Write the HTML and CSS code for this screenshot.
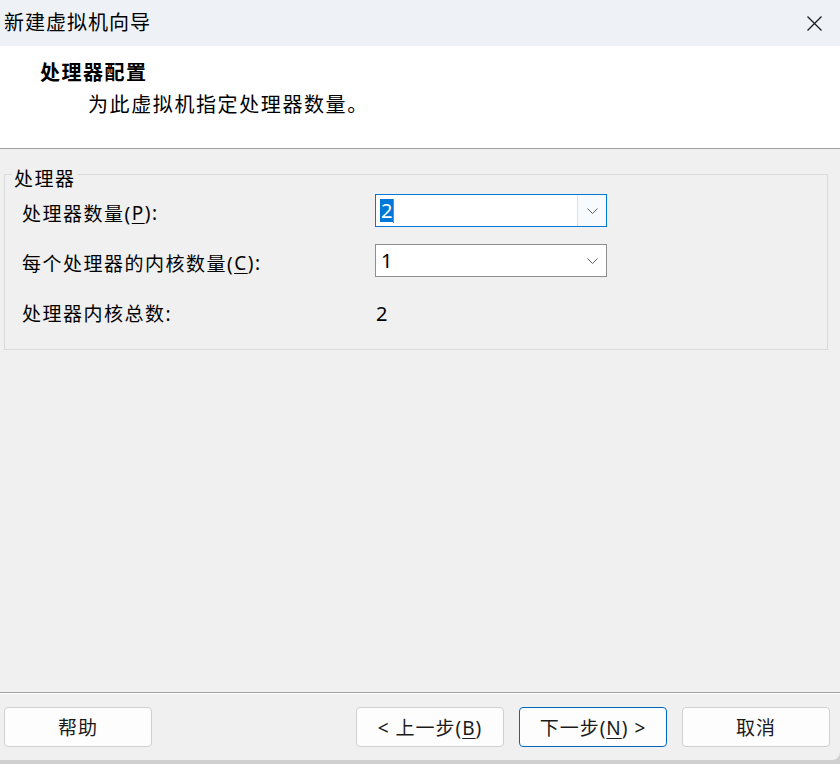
FILE: index.html
```html
<!DOCTYPE html>
<html lang="zh-CN">
<head>
<meta charset="utf-8">
<title>新建虚拟机向导</title>
<link rel="stylesheet" href="styles.css">
</head>
<body>
<div class="window">
  <div class="titlebar">
    <div class="title">新建虚拟机向导</div>
    <svg class="close" width="15" height="15" viewBox="0 0 15 15"><path d="M0.5 0.5 L14.5 14.5 M14.5 0.5 L0.5 14.5" stroke="#1a1a1a" stroke-width="1.3" fill="none"/></svg>
  </div>
  <div class="header">
    <div class="heading">处理器配置</div>
    <div class="subtitle">为此虚拟机指定处理器数量。</div>
  </div>
  <div class="content">
    <div class="group">
      <div class="legend">处理器</div>
      <div class="rows">
        <div class="label">处理器数量(<u>P</u>):</div>
        <div class="cell combo-cell">
          <div class="combo focused">
            <div class="combo-value"><span class="sel">2</span><span class="caret"></span></div>
            <div class="combo-btn"><svg width="11" height="6" viewBox="0 0 11 6"><polyline points="0.5,0.5 5.5,5.5 10.5,0.5" fill="none" stroke="#606060" stroke-width="1"/></svg></div>
          </div>
        </div>
        <div class="label">每个处理器的内核数量(<u>C</u>):</div>
        <div class="cell combo-cell">
          <div class="combo">
            <div class="combo-value">1</div>
            <div class="combo-btn plain"><svg width="11" height="6" viewBox="0 0 11 6"><polyline points="0.5,0.5 5.5,5.5 10.5,0.5" fill="none" stroke="#606060" stroke-width="1"/></svg></div>
          </div>
        </div>
        <div class="label">处理器内核总数:</div>
        <div class="cell"><span class="total">2</span></div>
      </div>
    </div>
  </div>
  <div class="footer">
    <button class="btn">帮助</button>
    <div class="spacer"></div>
    <button class="btn">&lt; 上一步(<u>B</u>)</button>
    <button class="btn default">下一步(<u>N</u>) &gt;</button>
    <button class="btn">取消</button>
  </div>
</div>
</body>
</html>
```
FILE: styles.css
```css
html, body {
  margin: 0;
  padding: 0;
}
body {
  width: 840px;
  height: 764px;
  overflow: hidden;
  background: linear-gradient(#b4b4b4, #d0d0d0);
  font-family: "Noto Sans", "Noto Sans CJK SC", sans-serif;
  color: #000;
}
.window {
  height: 760px;
  display: flex;
  flex-direction: column;
  background: #f0f0f0;
  border-bottom-right-radius: 8px;
  overflow: hidden;
}
.titlebar {
  height: 46px;
  flex: none;
  background: #eef2f7;
  display: flex;
  align-items: center;
  justify-content: space-between;
  padding: 0 18px 0 4px;
}
.title {
  font-size: 20px;
  letter-spacing: 1px;
  line-height: 24px;
}
.close {
  display: block;
}
.header {
  flex: none;
  background: #fff;
  border-bottom: 1px solid #a0a0a0;
  padding: 16px 0 0 40px;
  box-sizing: border-box;
  height: 103px;
}
.heading {
  font-size: 20px;
  font-weight: bold;
  letter-spacing: 1.5px;
  line-height: 22px;
}
.subtitle {
  margin: 10px 0 0 48px;
  font-size: 20px;
  letter-spacing: 1.6px;
  line-height: 22px;
}
.content {
  flex: 1;
  padding-top: 25px;
}
.group {
  margin: 0 12px 0 4px;
  border: 1px solid #dadada;
  padding: 0 0 12px 0;
}
.legend {
  width: fit-content;
  margin: -7px 0 0 7px;
  padding: 0 2px;
  background: #f0f0f0;
  font-size: 19px;
  letter-spacing: 1.5px;
  line-height: 22px;
}
.rows {
  margin-top: -3px;
  display: grid;
  grid-template-columns: 353px 232px;
  grid-auto-rows: 50px;
  padding-left: 17px;
}
.label {
  font-size: 19px;
  letter-spacing: 1.5px;
  display: flex;
  align-items: center;
  padding-top: 2px;
}
.label u {
  text-underline-offset: 3px;
}
.cell {
  display: flex;
  align-items: center;
}
.cell.combo-cell {
  align-items: flex-start;
  padding-top: 7px;
}
.combo {
  width: 232px;
  height: 33px;
  box-sizing: border-box;
  border: 1px solid #8e8e8e;
  background: #fff;
  display: flex;
}
.combo.focused {
  border-color: #0078d7;
}
.combo-value {
  flex: 1;
  display: flex;
  align-items: center;
  padding-left: 4px;
  font-size: 20px;
}
.combo:not(.focused) .combo-value {
  padding-left: 5px;
}
.sel {
  background: #0078d7;
  color: #fff;
  line-height: 23px;
  padding: 0 1px;
}
.caret {
  width: 1px;
  height: 24px;
  background: #d0703a;
}
.combo-btn {
  width: 28px;
  border-left: 1px solid #cfe4f8;
  background: #f8fbfe;
  display: flex;
  align-items: center;
  justify-content: center;
}
.combo-btn.plain {
  border-left-color: transparent;
  background: #fff;
}
.combo-btn svg {
  display: block;
}
.total {
  font-size: 20px;
  padding-left: 1px;
  padding-top: 2px;
}
.footer {
  flex: none;
  height: 68px;
  box-sizing: border-box;
  border-top: 1px solid #a0a0a0;
  box-shadow: inset 0 1px 0 #fdfdfd;
  display: flex;
  align-items: flex-start;
  padding: 14px 10px 0 4px;
  gap: 15px;
}
.spacer {
  flex: 1;
}
.btn {
  width: 148px;
  height: 40px;
  box-sizing: border-box;
  border: 1px solid #d0d0d0;
  border-radius: 4px;
  background: #fdfdfd;
  font-family: "Noto Sans", "Noto Sans CJK SC", sans-serif;
  font-size: 19px;
  letter-spacing: 1px;
  color: #1a1a1a;
  padding: 0;
}
.btn u {
  text-underline-offset: 3px;
}
.btn.default {
  border-color: #0067c0;
}
```
